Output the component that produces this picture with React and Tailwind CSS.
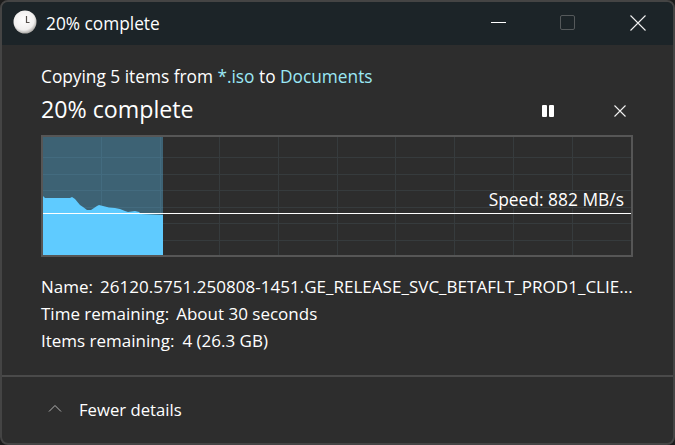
import React from 'react';

const FONT = "font-['Open_Sans','Noto_Sans',sans-serif]";

const ClockIcon = () => (
    <svg width="24" height="24" viewBox="0 0 24 24">
        <defs>
            <radialGradient id="clockFace" cx="45%" cy="40%" r="62%">
                <stop offset="0%" stopColor="#ffffff" />
                <stop offset="72%" stopColor="#f0efee" />
                <stop offset="100%" stopColor="#a09e9b" />
            </radialGradient>
        </defs>
        <circle cx="12" cy="12" r="11.5" fill="url(#clockFace)" />
        <path d="M13.5 6v6.5h3" fill="none" stroke="#55504c" strokeWidth="1.2" />
    </svg>
);

const verticals = [101, 160, 219, 278, 337, 395, 454, 513, 572];
const horizontals = [157, 174, 190, 207, 223, 240];
const fillPoints = '43,196 45,198 70,198 72,197 75,199 80,205 83,207 87,210 91,210 97,206 99,205 103,206 109,207.5 115,208 120,209 125,211 128,212 135,211 139,212 141,214 163,215 163,255 43,255';

const SpeedGraph = () => (
    <div className="relative h-[122px] w-[592px] border-2 border-[#565656]">
        <svg width="588" height="118" viewBox="43 137 588 118" className="block">
            {verticals.map((x) => (
                <line key={x} x1={x + 0.5} x2={x + 0.5} y1="137" y2="255" stroke="#363b3d" />
            ))}
            {horizontals.map((y) => (
                <line key={y} x1="43" x2="631" y1={y + 0.5} y2={y + 0.5} stroke="#363b3d" />
            ))}
            <rect x="43" y="137" width="120" height="118" fill="#5fcbff" fillOpacity="0.34" />
            <polygon points={fillPoints} fill="#5fcbff" />
            <line x1="43" x2="631" y1="213.5" y2="213.5" stroke="#ffffff" />
        </svg>
        <span className="absolute right-[7px] top-[51px] text-[17.4px] leading-[22px] text-white">Speed: 882 MB/s</span>
    </div>
);

export default function App() {
    return (
        <div className={`${FONT} h-[445px] w-[675px] bg-[#1c1c1c] text-white`}>
            <div className="flex h-full w-full flex-col overflow-hidden rounded-[8px] border-2 border-[#444444] bg-[#2d2d2d]">
                {/* Title bar */}
                <div className="flex h-[43px] shrink-0 items-center bg-[#1c2428]">
                    <div className="mb-[3px] ml-[11px] mr-[9px]"><ClockIcon /></div>
                    <span className="text-[17.3px]">20% complete</span>
                    <div className="ml-auto flex items-center pb-[2px]">
                        <div className="mr-[54px] h-px w-[15px] bg-white" />
                        <div className="mr-[55px] h-[15px] w-[15px] rounded-[2px] border border-[#55595b]" />
                        <svg width="16" height="16" viewBox="0 0 16 16" className="mr-[27px]">
                            <path d="M.5.5l15 15M15.5.5l-15 15" stroke="#f0f0f0" strokeWidth="1.1" />
                        </svg>
                    </div>
                </div>

                {/* Copy progress */}
                <div className="flex flex-1 flex-col pl-[39px]">
                    <div className="mt-[21px] text-[17.3px] leading-[22px]">
                        Copying 5 items from <span className="text-[#9be8f5]">*.iso</span> to <span className="text-[#9be8f5]">Documents</span>
                    </div>
                    <div className="mt-[6px] flex h-[30px] items-center">
                        <span className="text-[23.2px]">20% complete</span>
                        <div className="ml-auto mr-[47px] flex items-center pt-[3px]">
                            <div className="mr-[60px] flex gap-[2px]">
                                <div className="h-[12px] w-[5px] rounded-[1px] bg-white" />
                                <div className="h-[12px] w-[5px] rounded-[1px] bg-white" />
                            </div>
                            <svg width="12" height="12" viewBox="0 0 12 12">
                                <path d="M.5.5l11 11M11.5.5l-11 11" stroke="#f0f0f0" strokeWidth="1.1" />
                            </svg>
                        </div>
                    </div>
                    <div className="mt-[11px]"><SpeedGraph /></div>

                    <div className="mt-[19px] flex w-[592px] flex-col gap-[5px] text-[17px] leading-[22px]">
                        <div className="flex gap-[7px]">
                            <span>Name:</span>
                            <span className="whitespace-nowrap tracking-[0.025px]">26120.5751.250808-1451.GE_RELEASE_SVC_BETAFLT_PROD1_CLIE...</span>
                        </div>
                        <div className="flex gap-[7px]">
                            <span>Time remaining:</span>
                            <span>About 30 seconds</span>
                        </div>
                        <div className="flex gap-[8px]">
                            <span>Items remaining:</span>
                            <span>4 (26.3 GB)</span>
                        </div>
                    </div>
                </div>

                {/* Footer */}
                <div className="flex h-[68px] shrink-0 items-center border-t-2 border-[#4a4a4a] pl-[46px]">
                    <svg width="14" height="8" viewBox="0 0 14 8" className="mb-[4px] mr-[17px]">
                        <path d="M1 7.5l6-6 6 6" fill="none" stroke="#b4b4b4" strokeWidth="1" />
                    </svg>
                    <span className="text-[16.7px]">Fewer details</span>
                </div>
            </div>
        </div>
    );
}
